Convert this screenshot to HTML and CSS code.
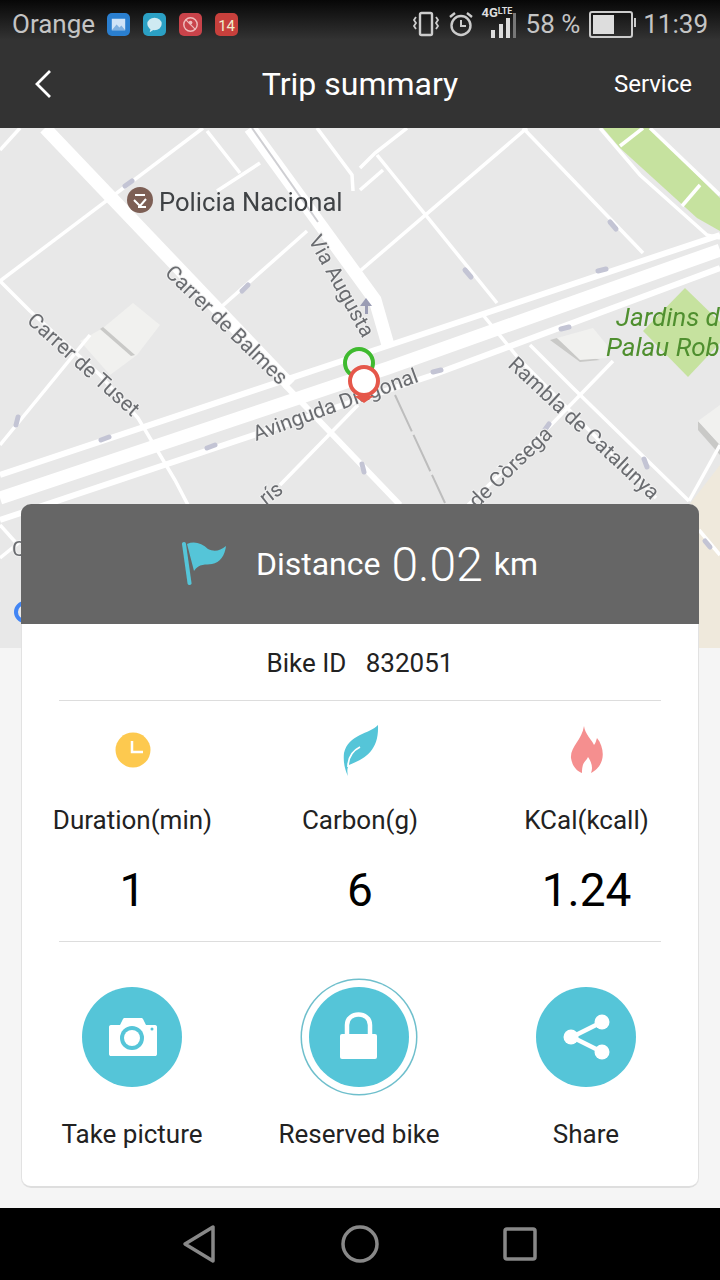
FILE: index.html
```html
<!DOCTYPE html>
<html>
<head>
    <meta name="viewport" content="width=device-width, initial-scale=1.0">
    <title>Trip summary</title>
    <link rel="stylesheet" href="styles.css">
</head>
<body>
    <div class="top">
        <div class="status">
            <div class="status-left">
                <span class="carrier">Orange</span>
                <span class="app-icon blue">
                    <svg viewBox="0 0 24 24"><rect x="5" y="6" width="14" height="12" fill="#cfe3f7"/><path d="M5 18l5-6 3 3 2-2 4 5z" fill="#7fb0e0"/></svg>
                </span>
                <span class="app-icon cyan">
                    <svg viewBox="0 0 24 24"><ellipse cx="12" cy="11.5" rx="7.5" ry="6.5" fill="#cfeaf2"/><path d="M8 16l-1 4 5-3z" fill="#cfeaf2"/></svg>
                </span>
                <span class="app-icon red">
                    <svg viewBox="0 0 24 24"><circle cx="12" cy="12" r="7" fill="none" stroke="#eebcbc" stroke-width="1.5"/><circle cx="12" cy="10" r="2" fill="#eebcbc"/><path d="M7 7l10 10" stroke="#eebcbc" stroke-width="1.2"/></svg>
                </span>
                <span class="app-icon cal">14</span>
            </div>
            <div class="status-right">
                <svg class="ic-vibrate" viewBox="0 0 28 26">
                    <rect x="8" y="2" width="12" height="22" rx="1.5" fill="none" stroke="#ccc" stroke-width="2.4"/>
                    <path d="M4 6l-2 3 2 3-2 3 2 3M24 6l2 3-2 3 2 3-2 3" fill="none" stroke="#ccc" stroke-width="1.8"/>
                </svg>
                <svg class="ic-alarm" viewBox="0 0 26 28">
                    <circle cx="13" cy="15.5" r="9.5" fill="none" stroke="#ccc" stroke-width="2.4"/>
                    <path d="M13 10v6h5" fill="none" stroke="#ccc" stroke-width="2"/>
                    <path d="M2 7l5-4M24 7l-5-4" stroke="#ccc" stroke-width="2.4"/>
                </svg>
                <span class="signal">
                    <span class="net">4G<small>LTE</small></span>
                    <svg viewBox="0 0 36 26">
                        <rect x="9" y="17" width="4" height="8" fill="#ddd"/>
                        <rect x="17" y="11" width="4" height="14" fill="#ddd"/>
                        <rect x="24" y="5" width="4" height="20" fill="#ddd"/>
                        <rect x="31" y="0" width="3" height="25" fill="#777"/>
                    </svg>
                </span>
                <span class="percent">58 %</span>
                <span class="battery"><span class="battery-level"></span></span>
                <span class="time">11:39</span>
            </div>
        </div>
        <header class="titlebar">
            <div class="back">
                <svg viewBox="0 0 20 30"><path d="M17 2L4 15l13 13" fill="none" stroke="#fff" stroke-width="2.8"/></svg>
            </div>
            <h1>Trip summary</h1>
            <div class="service">Service</div>
        </header>
    </div>

    <div class="map">
        <svg viewBox="0 128 720 520">
            <!-- park and buildings -->
            <path class="tan" d="M720 465L689 505V648H720Z"/>
            <path class="park" d="M603 128H650L720 198V231L697 218L620 148Z"/>
            <path class="park" d="M685 288L720 322V343L688 377L643 331Z"/>
            <path class="block" d="M133 303L160 325L137 355L110 375L80 341L103 328Z"/>
            <path class="shade" d="M103 327L135 355L131 356L100 329Z"/>
            <path class="shade" d="M550 340L580 362L600 360L575 352L557 338Z"/>
            <path class="block" d="M557 338L593 328L607 345V358L580 360Z"/>
            <path class="shade" d="M698 421L720 445V455L698 430Z"/>
            <path class="block" d="M698 421L720 405V445Z"/>

            <!-- big roads -->
            <g class="road-lg">
                <path d="M45 128L290 385"/>
                <path d="M250 128L375 300L388 345"/>
                <path d="M0 498L388 368L720 250"/>
            </g>
            <path class="road-divider" d="M252 128L318 222"/>
            <g class="road-md">
                <path d="M0 475L390 345L720 235"/>
                <path d="M0 520L430 376L720 268"/>
                <path d="M285 385L400 505"/>
            </g>
            <g class="road-sm">
                <path d="M203 128L0 281"/>
                <path d="M0 150L20 128"/>
                <path d="M0 281L30 311L100 375L138 418L175 480L188 505"/>
                <path d="M217 191L260 163"/>
                <path d="M307 231L220 308"/>
                <path d="M207 131L240 173"/>
                <path d="M317 128L352 175L353 191"/>
                <path d="M407 128L375 153L360 168"/>
                <path d="M383 170L360 190"/>
                <path d="M377 155L497 303"/>
                <path d="M360 271L527 128"/>
                <path d="M523 128L643 253"/>
                <path d="M483 315L520 360L656 498"/>
                <path d="M530 345L573 388L689 501"/>
                <path d="M280 485L358 405"/>
                <path d="M468 505L551 425L613 361"/>
                <path d="M90 335L0 445"/>
                <path d="M0 525L18 545"/>
                <path d="M0 558L21 541"/>
                <path d="M699 530L720 555"/>
                <path d="M689 501L720 445"/>
                <path d="M650 128L720 195"/>
                <path d="M600 128L640 175L707 235L720 238"/>
                <path d="M620 146L643 128"/>
                <path d="M682 206L700 185"/>
            </g>
            <path class="rail" d="M395 395L445 503" />

            <!-- one-way arrows -->
            <g class="arrow">
                <path d="M125 186L132 181"/>
                <path d="M242 291L248 285"/>
                <path d="M465 270L471 277"/>
                <path d="M610 222L616 229"/>
                <path d="M598 271L606 269"/>
                <path d="M561 329L569 327"/>
                <path d="M433 372L441 370"/>
                <path d="M101 440L109 437"/>
                <path d="M207 448L215 445"/>
                <path d="M362 464L364 472"/>
                <path d="M644 459L647 467"/>
                <path d="M18 417L16 425"/>
                <path d="M549 424L544 431"/>
                <path d="M705 541L710 547"/>
            </g>
            <path class="arrow-up" d="M366 298L372 306H368V314H365V306H360Z"/>

            <!-- labels -->
            <circle class="poi" cx="140" cy="200" r="13"/>
            <path class="poi-mark" d="M135 195H145M134 200L140 206L146 199M138 207H146" />
            <text class="poi-label" x="159" y="211">Policia Nacional</text>
            <text class="street" transform="translate(164 274) rotate(44)">Carrer de Balmes</text>
            <text class="street" transform="translate(308 240) rotate(61)">Via Augusta</text>
            <text class="street" transform="translate(26 322) rotate(42)">Carrer de Tuset</text>
            <text class="street" transform="translate(256 441) rotate(-20)">Avinguda Diagonal</text>
            <text class="street" transform="translate(507 366) rotate(43)">Rambla de Catalunya</text>
            <text class="street" transform="translate(477 509) rotate(-44)">de Còrsega</text>
            <text class="street" transform="translate(266 506) rotate(-38)">rís</text>
            <text class="street" transform="translate(12 556)">C</text>
            <text class="park-label" x="616" y="326">Jardins d</text>
            <text class="park-label" x="606" y="356">Palau Rob</text>
            <circle class="logo-g" cx="25" cy="612" r="9"/>

            <!-- start and end of the trip -->
            <circle class="pin-start" cx="359" cy="363" r="14"/>
            <path class="pin-end-tip" d="M354 396L364 403L374 396Z"/>
            <circle class="pin-end" cx="364" cy="381" r="14"/>
        </svg>
    </div>

    <div class="card">
        <div class="card-head">
            <svg class="flag" viewBox="0 0 44 44">
                <path d="M5 3C12 0 20 2 26 8C32 11 38 10 44 5C43 14 38 22 30 23C24 24 17 22 12 30Z" fill="#55c5d8"/>
                <path d="M2 3L7.500 42" stroke="#55c5d8" stroke-width="4" stroke-linecap="round"/>
            </svg>
            <span class="dist-label">Distance</span>
            <span class="dist-value">0.02</span>
            <span class="dist-label">km</span>
        </div>

        <div class="bike-id">Bike ID &nbsp; 832051</div>
        <div class="divider"></div>

        <div class="columns stats">
            <div class="stat">
                <svg class="stat-icon" viewBox="0 0 60 60">
                    <circle cx="30" cy="30" r="17.500" fill="#fdc94f"/>
                    <path d="M29 21V32H40" fill="none" stroke="#fff" stroke-width="2.500"/>
                </svg>
                <div class="stat-label">Duration(min)</div>
                <div class="stat-value">1</div>
            </div>
            <div class="stat">
                <svg class="stat-icon" viewBox="0 0 60 60">
                    <path d="M48 5C40 14 18 14 14 33C13 42 15 50 18 56C17 52 17 48 19 45C36 38 49 30 48 5Z" fill="#55c5d8"/>
                    <path d="M18 47C18 38 22 31 30 27" fill="none" stroke="#fff" stroke-width="1.800"/>
                </svg>
                <div class="stat-label">Carbon(g)</div>
                <div class="stat-value">6</div>
            </div>
            <div class="stat">
                <svg class="stat-icon" viewBox="0 0 60 60">
                    <path d="M27 6C28 14 35 20 37 25C39 23 39 20 40 18C45 24 47 33 45 40C43 47 38 51 34 53C36 48 35 43 31 37C29 42 25 41 25 53C19 51 15 45 14 38C13 27 25 20 27 6Z" fill="#f58f8f"/>
                </svg>
                <div class="stat-label">KCal(kcall)</div>
                <div class="stat-value">1.24</div>
            </div>
        </div>
        <div class="divider"></div>

        <div class="columns actions">
            <div class="action">
                <div class="round-btn">
                    <svg viewBox="0 0 100 100">
                        <path d="M27 40C27 38.500 28 38 30 38H38L41 32C41.500 31 42 31 43 31H59C60 31 60.500 31 61 32L64 38H72C74 38 75 38.500 75 40V67C75 68.500 74 69 73 69H29C28 69 27 68.500 27 67Z" fill="#fff"/>
                        <circle cx="50" cy="51" r="12" fill="#55c5d8"/>
                        <circle cx="50" cy="51" r="8" fill="#fff"/>
                        <circle cx="70" cy="42" r="1.500" fill="#55c5d8"/>
                    </svg>
                </div>
                <div class="action-label">Take picture</div>
            </div>
            <div class="action">
                <div class="round-btn ringed">
                    <svg viewBox="0 0 100 100">
                        <rect x="31" y="47" width="37" height="25" rx="2" fill="#fff"/>
                        <path d="M38 48V38C38 24 61 24 61 38V48" fill="none" stroke="#fff" stroke-width="4.500"/>
                    </svg>
                </div>
                <div class="action-label">Reserved bike</div>
            </div>
            <div class="action">
                <div class="round-btn">
                    <svg viewBox="0 0 100 100">
                        <path d="M66 35L36 50L66 65" fill="none" stroke="#fff" stroke-width="4.500"/>
                        <circle cx="66" cy="35" r="7.500" fill="#fff"/>
                        <circle cx="35" cy="50" r="7.500" fill="#fff"/>
                        <circle cx="66" cy="65" r="7.500" fill="#fff"/>
                    </svg>
                </div>
                <div class="action-label">Share</div>
            </div>
        </div>
    </div>

    <div class="navbar">
        <svg class="nav-icon" viewBox="0 0 36 40"><path d="M3 20L31 3V37Z" fill="none" stroke="#888" stroke-width="3.500" stroke-linejoin="round"/></svg>
        <svg class="nav-icon" viewBox="0 0 40 40"><circle cx="20" cy="20" r="17" fill="none" stroke="#888" stroke-width="3.500"/></svg>
        <svg class="nav-icon" viewBox="0 0 36 40"><rect x="3" y="5" width="30" height="30" rx="2" fill="none" stroke="#888" stroke-width="3.500"/></svg>
    </div>
</body>
</html>
```

FILE: styles.css
```css
body {
    font-family: Roboto, "Liberation Sans", sans-serif;
    margin: 0;
    padding: 0;
    width: 720px;
    height: 1280px;
    overflow: hidden;
    background-color: #f5f5f5;
    display: flex;
    flex-direction: column;
}

/* status bar + title */
.top {
    height: 128px;
    background: linear-gradient(#070707, #333 40px, #333);
}

.status {
    height: 48px;
    padding: 0 12px;
    display: flex;
    justify-content: space-between;
    align-items: center;
    color: #c4c4c4;
    font-size: 26px;
}

.status-left,
.status-right {
    display: flex;
    align-items: center;
}

.carrier {
    margin-right: 12px;
}

.app-icon {
    width: 23px;
    height: 23px;
    margin-right: 13px;
    border-radius: 5px;
    display: flex;
    align-items: center;
    justify-content: center;
}

.app-icon svg {
    width: 23px;
    height: 23px;
}

.blue {
    background-color: #2a7fd0;
}

.cyan {
    background-color: #2ba0c4;
}

.red {
    background-color: #c9434a;
}

.cal {
    background-color: #c8403c;
    color: #eec;
    font-size: 15px;
    padding-top: 3px;
    box-sizing: border-box;
}

.ic-vibrate {
    width: 28px;
    height: 26px;
    margin-right: 8px;
}

.ic-alarm {
    width: 26px;
    height: 28px;
    margin-right: 8px;
}

.signal {
    position: relative;
    width: 36px;
    height: 30px;
    margin-right: 8px;
}

.signal svg {
    position: absolute;
    left: 0;
    bottom: 0;
    width: 36px;
    height: 26px;
}

.net {
    position: absolute;
    left: 0;
    top: -4px;
    font-size: 13px;
    font-weight: 700;
    color: #ddd;
}

.net small {
    font-size: 9px;
    vertical-align: 3px;
}

.percent {
    margin-right: 9px;
}

.battery {
    width: 36px;
    height: 19px;
    border: 2px solid #ccc;
    border-radius: 3px;
    padding: 2px;
    box-sizing: content-box;
    margin-right: 10px;
    position: relative;
}

.battery::after {
    content: "";
    position: absolute;
    right: -5px;
    top: 5px;
    width: 2px;
    height: 9px;
    background-color: #ccc;
}

.battery-level {
    display: block;
    width: 58%;
    height: 100%;
    background-color: #ddd;
}

.titlebar {
    height: 80px;
    display: grid;
    grid-template-columns: 1fr auto 1fr;
    align-items: center;
    padding: 0 28px 8px;
    box-sizing: border-box;
    color: #fff;
}

.back svg {
    display: block;
    width: 20px;
    height: 30px;
    margin-left: 5px;
}

h1 {
    margin: 0;
    font-size: 32px;
    font-weight: 400;
}

.service {
    text-align: right;
    font-size: 24px;
}

/* map */
.map {
    height: 520px;
    background-color: #e8e8e8;
}

.map svg {
    display: block;
    width: 720px;
    height: 520px;
    filter: blur(0.5px);
}

.tan {
    fill: #efe9dc;
}

.park {
    fill: #c6e29f;
}

.block {
    fill: #f1f1ef;
}

.shade {
    fill: #c9c9c7;
}

.road-lg path,
.road-md path,
.road-sm path {
    fill: none;
    stroke: #fff;
}

.road-lg path {
    stroke-width: 13px;
}

.road-md path {
    stroke-width: 6px;
}

.road-sm path {
    stroke-width: 3.5px;
}

.road-divider {
    fill: none;
    stroke: #cfcfd3;
    stroke-width: 2px;
}

.rail {
    fill: none;
    stroke: #bdbdbd;
    stroke-width: 2px;
    stroke-dasharray: 40 4;
}

.arrow path {
    fill: none;
    stroke: #c3c4d4;
    stroke-width: 5px;
    stroke-linecap: round;
}

.arrow-up {
    fill: #9a9cb4;
}

.poi {
    fill: #7d5f55;
}

.poi-mark {
    fill: none;
    stroke: #fff;
    stroke-width: 2px;
}

.poi-label {
    font-size: 25.6px;
    fill: #3f4245;
}

.street {
    font-size: 21px;
    fill: #6a6c70;
    paint-order: stroke;
    stroke: #f0f0f0;
    stroke-width: 2px;
}

.park-label {
    font-size: 26px;
    font-style: italic;
    fill: #4f8f2f;
}

.logo-g {
    fill: none;
    stroke: #4285f4;
    stroke-width: 4px;
}

.pin-start {
    fill: #f2f2f2;
    stroke: #3fba2f;
    stroke-width: 4px;
}

.pin-end {
    fill: #fff;
    stroke: #e5574a;
    stroke-width: 4px;
}

.pin-end-tip {
    fill: #e5574a;
}

/* trip card */
.card {
    margin: -144px 21px 0;
    height: 684px;
    box-sizing: border-box;
    background-color: #fff;
    border: 1px solid #e2e2e2;
    border-top: none;
    border-bottom: 2px solid #dedede;
    border-radius: 10px;
    position: relative;
}

.card-head {
    height: 120px;
    margin: 0 -1px;
    background-color: #666;
    border-radius: 10px 10px 0 0;
    color: #fff;
    display: flex;
    justify-content: center;
    align-items: center;
}

.flag {
    width: 44px;
    height: 44px;
    margin-right: 30px;
    margin-top: -2px;
}

.dist-label {
    font-size: 32px;
}

.dist-value {
    font-size: 48px;
    font-weight: 300;
    margin: 0 11px;
}

.bike-id {
    height: 76px;
    line-height: 78px;
    text-align: center;
    font-size: 26px;
    color: #222;
}

.divider {
    height: 1px;
    margin: 0 37px;
    background-color: #ddd;
}

.columns {
    display: grid;
    grid-template-columns: 221px 234px 219px;
    text-align: center;
}

.stats {
    height: 240px;
    padding-top: 19px;
    box-sizing: border-box;
}

.stat {
    display: flex;
    flex-direction: column;
    align-items: center;
    gap: 20px;
}

.stat-icon {
    width: 60px;
    height: 60px;
}

.stat-label {
    height: 40px;
    line-height: 40px;
    font-size: 26px;
    color: #222;
}

.stat-value {
    height: 60px;
    line-height: 60px;
    font-size: 46px;
    color: #000;
}

.actions {
    grid-template-columns: 220px 234px 220px;
    padding-top: 45px;
}

.action {
    display: flex;
    flex-direction: column;
    align-items: center;
    gap: 27px;
}

.round-btn {
    width: 100px;
    height: 100px;
    border-radius: 50%;
    background-color: #55c5d8;
}

.round-btn svg {
    display: block;
    width: 100px;
    height: 100px;
}

.ringed {
    box-shadow: 0 0 0 7px #fff, 0 0 0 8.5px #6fbfcc;
}

.action-label {
    height: 40px;
    line-height: 40px;
    font-size: 26px;
    color: #222;
}

/* android nav */
.navbar {
    margin-top: auto;
    height: 72px;
    background-color: #000;
    display: grid;
    grid-template-columns: 36px 40px 36px;
    justify-content: center;
    column-gap: 122px;
    align-items: center;
}

.nav-icon {
    display: block;
    width: 100%;
    height: 40px;
}
```
